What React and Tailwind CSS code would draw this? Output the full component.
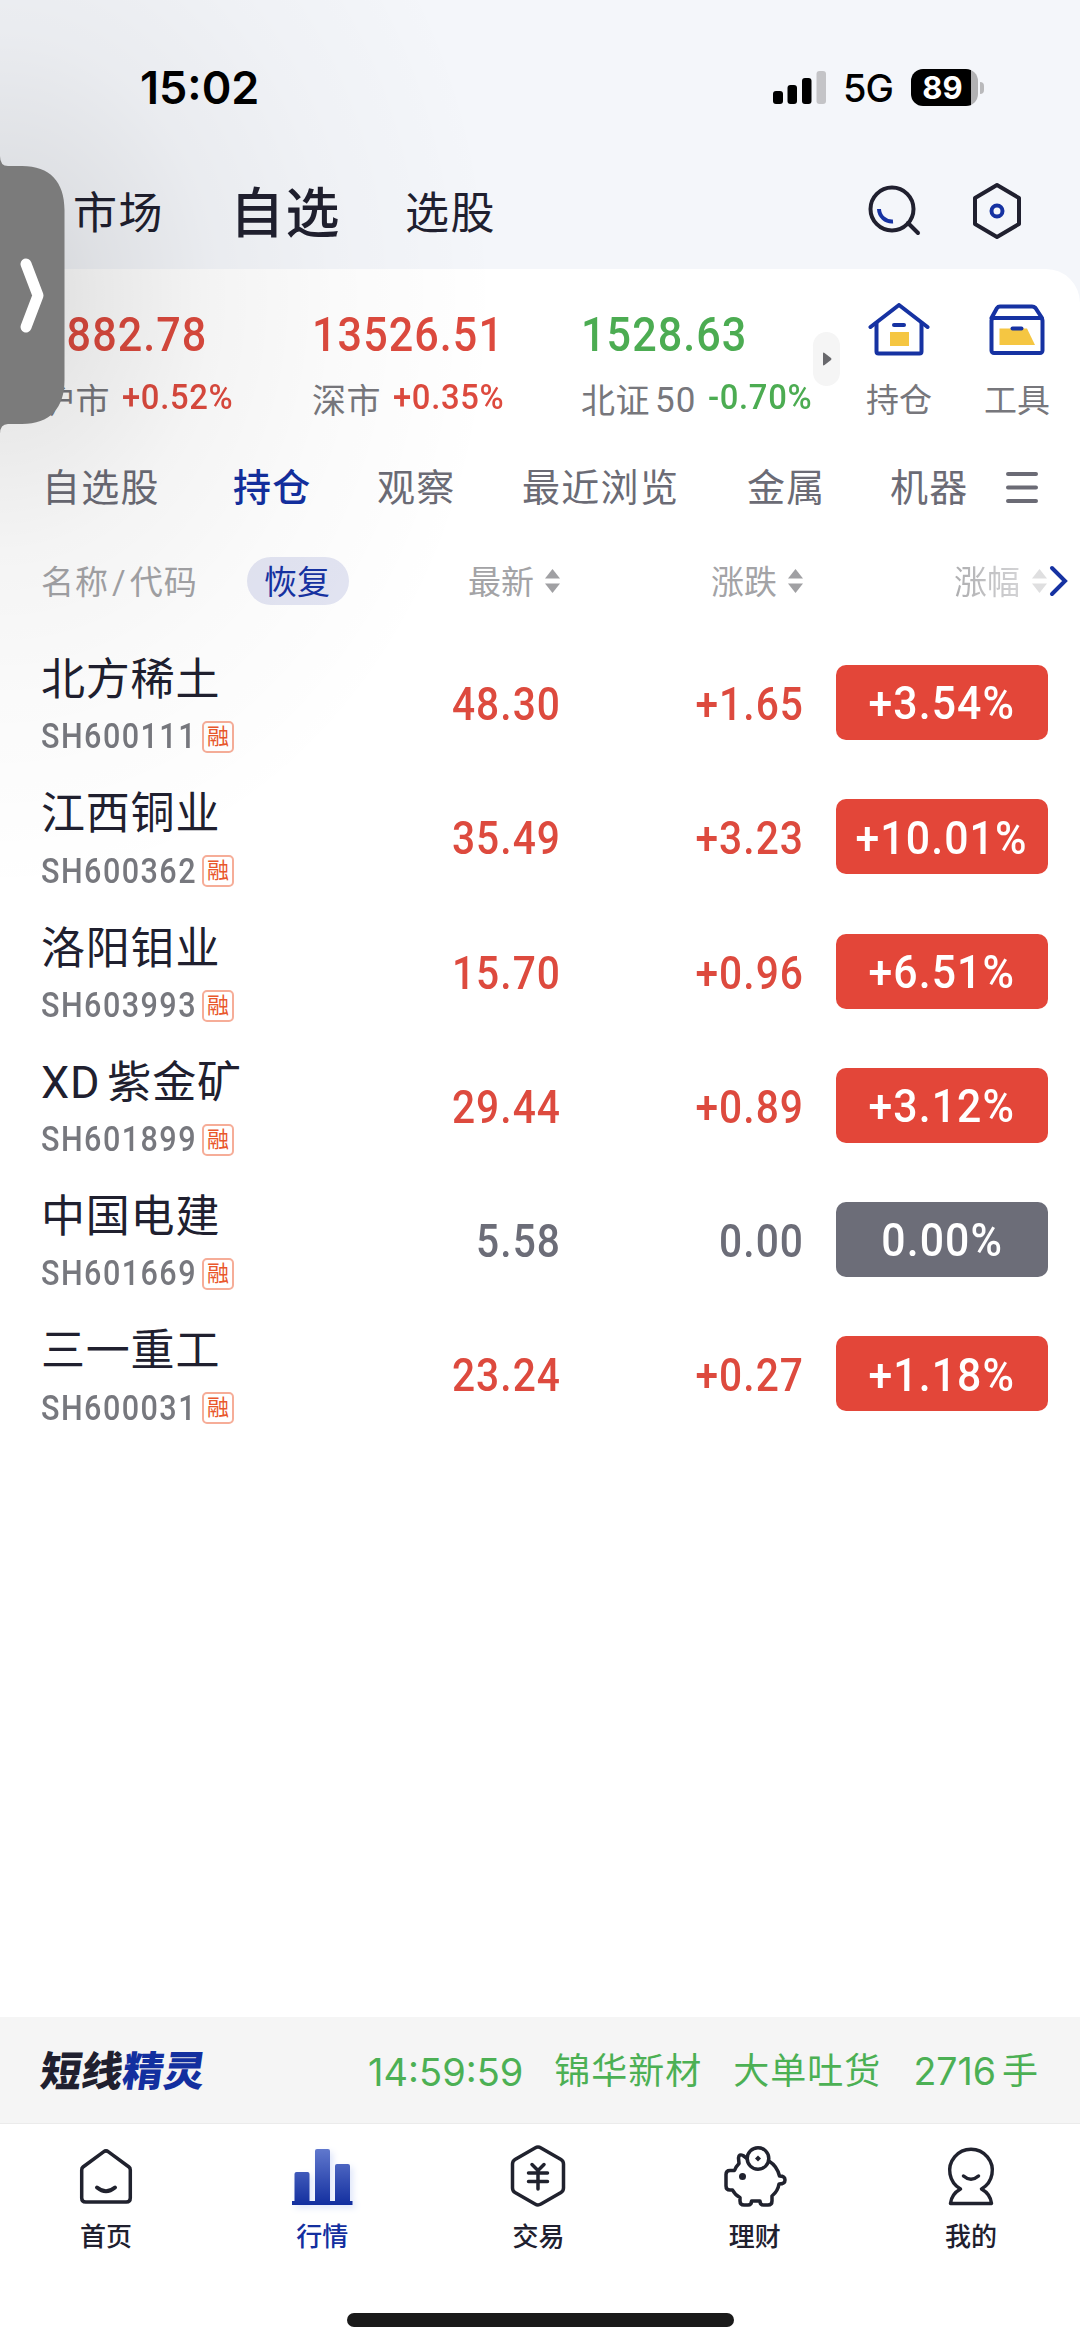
const indices = [
  { value: '3882.78', name: '沪市', change: '+0.52%', color: 'text-[#dd4a3e]', width: 'w-[271px]' },
  { value: '13526.51', name: '深市', change: '+0.35%', color: 'text-[#dd4a3e]', width: 'w-[269px]' },
  { value: '1528.63', name: '北证', suffix: '50', change: '-0.70%', color: 'text-[#4cac52]', width: 'w-[232px]' },
]

const stocks = [
  { name: '北方稀土', code: 'SH600111', price: '48.30', diff: '+1.65', pct: '+3.54%' },
  { name: '江西铜业', code: 'SH600362', price: '35.49', diff: '+3.23', pct: '+10.01%' },
  { name: '洛阳钼业', code: 'SH603993', price: '15.70', diff: '+0.96', pct: '+6.51%' },
  { name: '紫金矿', prefix: 'XD', code: 'SH601899', price: '29.44', diff: '+0.89', pct: '+3.12%' },
  { name: '中国电建', code: 'SH601669', price: '5.58', diff: '0.00', pct: '0.00%', flat: true },
  { name: '三一重工', code: 'SH600031', price: '23.24', diff: '+0.27', pct: '+1.18%' },
]

function StatusBar() {
  return (
    <div className="flex h-[144px] items-center pl-[140px] pr-[96px] pt-[31px] font-['Inter',sans-serif] text-black">
      <span className="text-[45px] font-semibold leading-none">15:02</span>
      <svg className="ml-auto" width="54" height="34" viewBox="0 0 54 34">
        <rect x="0" y="20" width="10" height="13" rx="3" />
        <rect x="14.5" y="14" width="9.5" height="19" rx="3" />
        <rect x="29" y="7" width="9.5" height="26" rx="3" />
        <rect x="43.5" y="0" width="9.5" height="33" rx="3" fill="#c4c4c7" />
      </svg>
      <span className="ml-[16px] text-[38px] font-medium leading-none tracking-[-1px]">5G</span>
      <div className="ml-[18px] flex h-[37px] w-[67px] items-center justify-center overflow-hidden rounded-[12px] bg-[linear-gradient(90deg,#000_60px,#b1b1b3_60px)]">
        <span className="mr-1 text-[31px] font-bold leading-none text-white">89</span>
      </div>
      <div className="ml-[2px] h-[12px] w-[4px] rounded-r-full bg-[#b9b9bb]" />
    </div>
  )
}

function TopNav() {
  return (
    <div className="flex h-[125px] items-center pl-[73px] pr-[57px] text-[#20202f]">
      <span className="pt-[14px] text-[44px] leading-none tracking-[1.5px]">市场</span>
      <span className="ml-[66px] pt-[16px] text-[54px] font-medium leading-none tracking-[1.5px]">自选</span>
      <span className="ml-[64px] pt-[14px] text-[44px] leading-none tracking-[1.5px]">选股</span>
      <svg className="ml-auto mt-[8px]" width="54" height="56" viewBox="0 0 54 56" fill="none" strokeWidth="4" strokeLinecap="round">
        <circle cx="25" cy="26" r="21.5" stroke="#20202f" />
        <path d="M41 40L51 50" stroke="#20202f" />
        <path d="M12 26A13 13 0 0 0 26 38.5" stroke="#1632a2" strokeLinecap="butt" />
      </svg>
      <svg className="ml-[50px] mt-[8px]" width="52" height="58" viewBox="0 0 52 58" fill="none" strokeWidth="4" strokeLinejoin="round">
        <path d="M26 3L48 16V42L26 55L4 42V16Z" stroke="#20202f" />
        <circle cx="26" cy="29" r="5.5" stroke="#1632a2" />
      </svg>
    </div>
  )
}

function IndexBar() {
  return (
    <div className="flex h-[160px] pl-[41px] pt-[34px]">
      {indices.map(item => (
        <div key={item.name} className={`shrink-0 ${item.width}`}>
          <div className={`mt-[3px] h-[58px] origin-left scale-x-[0.88] whitespace-nowrap text-[49px] font-medium leading-[58px] tracking-[1.2px] ${item.color}`}>
            {item.value}
          </div>
          <div className="mt-[13px] flex h-[44px] items-center whitespace-nowrap">
            <span className="mt-[3px] text-[34px] leading-none tracking-[0.5px] text-[#77777c]">{item.name}</span>
            {item.suffix && <span className="ml-[5px] mt-[3px] text-[35px] leading-none tracking-[1px] text-[#77777c]">{item.suffix}</span>}
            <span className={`mb-1 ml-[12px] origin-left scale-x-[0.95] text-[34.5px] font-medium leading-none tracking-[0.7px] ${item.color}`}>{item.change}</span>
          </div>
        </div>
      ))}
      <div className="mt-[29px] flex h-[54px] w-[27px] shrink-0 items-center justify-center rounded-full bg-[#f5f5f5]">
        <svg width="10" height="14" viewBox="0 0 10 14">
          <path d="M1 1.5Q1 0 2.5 1L9 6Q10 7 9 8L2.5 13Q1 14 1 12.5Z" fill="#68686c" />
        </svg>
      </div>
      <div className="ml-[25px] flex w-[68px] shrink-0 flex-col items-center">
        <svg width="62" height="54" viewBox="0 0 62 54" fill="none" stroke="#1632a2" strokeWidth="4" strokeLinecap="round" strokeLinejoin="round">
          <path d="M2.5 24L31 2L59.5 24" />
          <path d="M8.5 20V48.5Q8.5 50.5 10.5 50.5H51.5Q53.5 50.5 53.5 48.5V20" />
          <path d="M26 22H36" />
          <path d="M22 29H41V43H22Z" fill="#f5c642" stroke="none" />
        </svg>
        <span className="mt-[27px] whitespace-nowrap text-[33px] leading-none text-[#77777c]">持仓</span>
      </div>
      <div className="ml-[50px] flex w-[68px] shrink-0 flex-col items-center">
        <svg width="56" height="54" viewBox="0 0 56 54" fill="none" stroke="#1632a2" strokeWidth="4" strokeLinejoin="round" strokeLinecap="round">
          <path d="M2.5 15L8 5Q9 3.5 11 3.5H43Q45 3.5 46.5 5L53 15" />
          <rect x="2.5" y="15" width="51" height="35" rx="2.5" />
          <path d="M10.5 25.5H38L46 42H10.5Z" fill="#f5c642" stroke="none" />
          <path d="M23.5 25.5H32.5" />
        </svg>
        <span className="mt-[27px] whitespace-nowrap text-[33px] leading-none text-[#77777c]">工具</span>
      </div>
    </div>
  )
}

function GroupTabs() {
  return (
    <div className="flex h-[116px] items-center whitespace-nowrap pl-[42px] pt-[2px] text-[38px] leading-none tracking-[1.3px] text-[#6b6b75]">
      <span className="w-[191px]">自选股</span>
      <span className="w-[144px] font-medium text-[#132f9f]">持仓</span>
      <span className="w-[145px]">观察</span>
      <span className="w-[225px]">最近浏览</span>
      <span className="w-[143px]">金属</span>
      <span>机器</span>
      <svg className="ml-[36px]" width="34" height="34" viewBox="0 0 34 34" stroke="#6b6b75" strokeWidth="4" strokeLinecap="round">
        <path d="M3 3H31M3 16.5H31M3 30H31" />
      </svg>
    </div>
  )
}

function SortIcon({ fill = '#a0a0a3' }) {
  return (
    <svg className="shrink-0" width="15" height="24" viewBox="0 0 15 24" fill={fill}>
      <path d="M7.5 0L15 9.5H0Z" />
      <path d="M7.5 24L15 14.5H0Z" />
    </svg>
  )
}

function TableHead() {
  return (
    <div className="flex h-[72px] items-center whitespace-nowrap pl-[41px] text-[33px] leading-none text-[#a3a3a6]">
      <span className="w-[206px] pt-[2px] tracking-[1px]">名称<span className="mx-[3px]">/</span>代码</span>
      <span className="flex h-[48px] w-[102px] items-center justify-center rounded-full bg-[#e3e5f3] pr-[2px] pt-[2px] text-[#1632a2]">恢复</span>
      <span className="ml-[119px] pt-[2px]">最新</span>
      <span className="ml-[11px]"><SortIcon /></span>
      <span className="ml-[151px] pt-[2px]">涨跌</span>
      <span className="ml-[11px]"><SortIcon /></span>
      <span className="ml-[151px] bg-[linear-gradient(90deg,#adadaf,#d4d4d6)] bg-clip-text pt-[2px] text-transparent">涨幅</span>
      <span className="ml-[12px]"><SortIcon fill="#dfdfe0" /></span>
      <svg className="ml-[2px]" width="20" height="32" viewBox="0 0 20 32" fill="none" stroke="#1632a2" strokeWidth="4" strokeLinecap="round">
        <path d="M3 3L16 16L3 29" />
      </svg>
    </div>
  )
}

function StockRow({ stock }) {
  const color = stock.flat ? 'text-[#6c6d78]' : 'text-[#dd4a3e]'
  return (
    <div className="flex h-[134.3px] items-start whitespace-nowrap pl-[41px] leading-none">
      <div className="w-[215px] pt-[7px]">
        <div className="h-[56px] w-[199px] overflow-x-clip text-[44px] leading-[58px] tracking-[0.8px] text-[#20202f]">
          {stock.prefix && <span className="mr-[7px] text-[45px]">{stock.prefix}</span>}
          {stock.name}
        </div>
        <div className="mt-[13px] flex h-[34px] items-center">
          <span className="w-[161px] origin-left scale-x-[0.86] text-[35.5px] font-medium tracking-[1.7px] text-[#77787e]">{stock.code}</span>
          <span className="flex h-[32px] w-[32px] shrink-0 items-center justify-center rounded-[5px] border-2 border-[#f6ad98] text-[22px] text-[#e9572b]">融</span>
        </div>
      </div>
      <div className={`w-[305px] origin-right scale-x-[0.875] pt-[37px] text-right text-[46.5px] font-medium tracking-[1.2px] ${color}`}>{stock.price}</div>
      <div className={`w-[243px] origin-right scale-x-[0.875] pt-[37px] text-right text-[46.5px] font-medium tracking-[1.2px] ${color}`}>{stock.diff}</div>
      <div className={`ml-[32px] mt-[21px] flex h-[75px] w-[212px] items-center justify-center rounded-[10px] text-white ${stock.flat ? 'bg-[#6c6d78]' : 'bg-[#e34639]'}`}>
        <span className="scale-x-[0.92] pt-[2px] text-[46.5px] font-medium tracking-[1.2px]">{stock.pct}</span>
      </div>
    </div>
  )
}

function Ticker() {
  return (
    <div className="flex h-[107px] items-center whitespace-nowrap border-b border-[#ebebeb] bg-[#f5f5f5] pl-[41px] pr-[42px] pt-[4px] text-[36px] leading-none text-[#4cb054]">
      <span className="-skew-x-[8deg] text-[41px] font-black text-[#20202f]">
        短线<span className="text-[#132f9f]">精灵</span>
      </span>
      <span className="ml-auto font-['Inter',sans-serif] text-[38px]">14:59:59</span>
      <span className="ml-[31px] tracking-[1px]">锦华新材</span>
      <span className="ml-[31px] tracking-[1px]">大单吐货</span>
      <span className="ml-[32px] font-['Inter',sans-serif] text-[37.5px]">2716</span>
      <span className="ml-[6px]">手</span>
    </div>
  )
}

function HomeIcon() {
  return (
    <svg width="64" height="64" viewBox="0 0 64 64" fill="none" stroke="#20222e" strokeWidth="3.5" strokeLinecap="round" strokeLinejoin="round">
      <path d="M29.5 6.8Q32 5 34.5 6.8L55 22Q56.3 23 56.3 25V53Q56.3 57 52.3 57H11.7Q7.7 57 7.7 53V25Q7.7 23 9 22Z" />
      <path d="M23 42.5Q32 50 41 42.5" strokeWidth="4" />
    </svg>
  )
}

function QuotesIcon() {
  return (
    <svg className="drop-shadow-[3px_3px_3px_#dfe6fa]" width="64" height="64" viewBox="0 0 64 64">
      <defs>
        <linearGradient id="bars" x1="0" y1="4" x2="0" y2="60" gradientUnits="userSpaceOnUse">
          <stop offset="0" stopColor="#6078cd" />
          <stop offset="1" stopColor="#132f9f" />
        </linearGradient>
      </defs>
      <g fill="url(#bars)">
        <rect x="4.5" y="27" width="15" height="32" rx="2" />
        <rect x="25" y="4" width="15" height="55" rx="2" />
        <rect x="45" y="19" width="15" height="40" rx="2" />
        <rect x="2" y="56" width="60.5" height="4" />
      </g>
    </svg>
  )
}

function TradeIcon() {
  return (
    <svg width="64" height="64" viewBox="0 0 64 64" fill="none" stroke="#20222e" strokeWidth="3.5" strokeLinecap="round" strokeLinejoin="round">
      <path d="M29 3Q32 1.2 35 3L55 14.5Q57.5 16 57.5 19V43Q57.5 46 55 47.5L35 59Q32 60.8 29 59L9 47.5Q6.5 46 6.5 43V19Q6.5 16 9 14.5Z" />
      <path d="M26 19.5L32 25.5L38 19.5M22.5 28H41.5M22.5 36.5H41.5M32 26V44" />
    </svg>
  )
}

function PiggyIcon() {
  return (
    <svg width="64" height="64" viewBox="0 0 64 64" fill="none" stroke="#20222e" strokeWidth="3.5" strokeLinejoin="round" strokeLinecap="round">
      <path d="M24 13.5L20 10.5Q16 8.5 15.5 13L16 18.5Q13 21.5 11.5 25.5H7Q3 25.5 3 29.5V41Q3 45 7 45H9.5Q12 50 17 52.5V56Q17 60 21 60H25Q28.5 60 28.5 56H37Q37 60 40.5 60H45Q49 60 49 56V51Q55 46 56 39Q62 39 62 35Q62 31 56.5 31Q54 21 46.5 16.5" />
      <circle cx="35" cy="13.5" r="10.8" />
      <path d="M35 10.5L38 13.5L35 16.5L32 13.5Z" fill="#20222e" stroke="none" />
      <circle cx="19.5" cy="31.5" r="3.5" fill="#20222e" stroke="none" />
    </svg>
  )
}

function MineIcon() {
  return (
    <svg width="64" height="64" viewBox="0 0 64 64" fill="none" stroke="#20222e" strokeWidth="3.5" strokeLinejoin="round" strokeLinecap="round">
      <path d="M21.5 44A21.3 21.3 0 1 1 42.5 44Q51.5 49 52.5 58.5H11.5Q12.5 49 21.5 44Z" />
      <path d="M24.5 31Q32 37.5 39.5 31" />
    </svg>
  )
}

const tabs = [
  { label: '首页', Icon: HomeIcon },
  { label: '行情', Icon: QuotesIcon, active: true },
  { label: '交易', Icon: TradeIcon },
  { label: '理财', Icon: PiggyIcon },
  { label: '我的', Icon: MineIcon },
]

function TabBar() {
  return (
    <div className="-ml-[2px] mr-[1px] grid h-[189px] grid-cols-5 pt-[21px]">
      {tabs.map(({ label, Icon, active }) => (
        <div key={label} className="flex flex-col items-center">
          <Icon />
          <span className={`mt-[15px] text-[26px] font-medium leading-none ${active ? 'text-[#132f9f]' : 'text-[#20202f]'}`}>{label}</span>
        </div>
      ))}
    </div>
  )
}

// floating handle on the left edge, with the soft shadow it casts over the page
function SideHandle() {
  return (
    <>
      <div className="pointer-events-none absolute left-0 top-0 h-[900px] w-[620px] bg-[radial-gradient(ellipse_500px_600px_at_0px_295px,rgba(0,0,0,0.15)_0%,rgba(0,0,0,0.09)_20%,rgba(0,0,0,0.045)_43%,rgba(0,0,0,0.018)_68%,rgba(0,0,0,0.006)_88%,transparent_100%)]" />
      <svg className="absolute left-0 top-[156px]" width="66" height="280" viewBox="0 0 66 280" fill="none">
        <path d="M0 0Q0 10 8 10H22C50 10 64.5 26 64.5 54V224C64.5 252 50 268 22 268H8Q0 268 0 278Z" fill="#7b7b7b" />
        <path d="M26 108L38 139.5L26 171" stroke="#fff" strokeWidth="11" strokeLinecap="round" strokeLinejoin="round" />
      </svg>
    </>
  )
}

export default function App() {
  return (
    <div className="relative flex h-[2348px] w-[1080px] flex-col overflow-hidden bg-[#f4f6fa] font-['Roboto','Noto_Sans_CJK_SC',sans-serif]">
      <StatusBar />
      <TopNav />
      <div className="flex flex-1 flex-col rounded-t-[34px] bg-white">
        <IndexBar />
        <GroupTabs />
        <TableHead />
        <div className="mt-[27px]">
          {stocks.map(stock => <StockRow key={stock.code} stock={stock} />)}
        </div>
      </div>
      <Ticker />
      <div className="bg-white">
        <TabBar />
        <div className="mx-auto mb-[21px] h-[14px] w-[387px] rounded-full bg-[#1a1a1a]" />
      </div>
      <SideHandle />
    </div>
  )
}
